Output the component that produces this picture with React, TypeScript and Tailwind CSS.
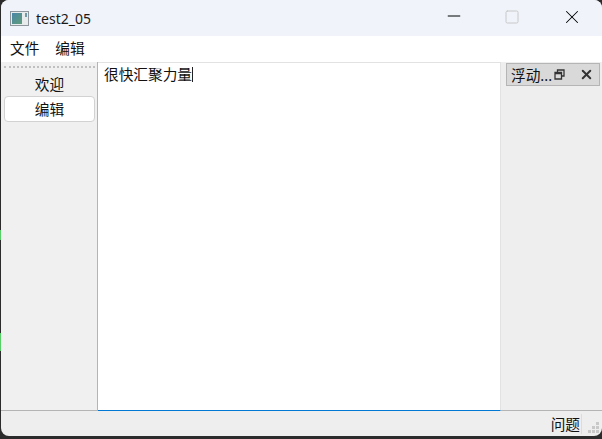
import { Minus, Square, X } from "lucide-react";

const FONT = "font-['Noto_Sans','Noto_Sans_CJK_SC',sans-serif]";

function AppIcon() {
  return (
    <svg width="19" height="15" viewBox="0 0 19 15" className="shrink-0">
      <defs>
        <linearGradient id="pane" x1="0" y1="0" x2="1" y2="1">
          <stop offset="0" stopColor="#4a86a8" />
          <stop offset="1" stopColor="#5f9c78" />
        </linearGradient>
      </defs>
      <rect x="0.5" y="0.5" width="18" height="14" fill="#e8ebec" stroke="#8f959c" />
      <rect x="2" y="2" width="10" height="11" fill="url(#pane)" />
      <rect x="15" y="2" width="2" height="4" fill="#6f9aa8" />
    </svg>
  );
}

function TitleBar() {
  return (
    <div className="flex h-9 shrink-0 items-center bg-[#f0f3f9] pl-[9px]">
      <AppIcon />
      <span className="ml-[7px] text-[14px] text-[#1a1a1a]">test2_05</span>
      <div className="ml-auto flex items-center pb-[2px]">
        <Minus size={20} strokeWidth={1.2} className="mb-[2px] mr-[40px] text-black" />
        <Square size={16} strokeWidth={1.5} className="mr-[41px] text-[#c8c8c8]" />
        <X size={22} strokeWidth={1.1} className="mr-[19px] text-black" />
      </div>
    </div>
  );
}

function MenuBar() {
  return (
    <div className="flex h-[26px] shrink-0 items-center gap-4 bg-white pb-[2px] pl-[9px] text-[14.67px] text-[#111]">
      <span>文件</span>
      <span>编辑</span>
    </div>
  );
}

function LeftDock() {
  return (
    <div className="flex w-[97px] shrink-0 flex-col border-r border-[#b4b4b4] bg-[#f0f0f0] pl-[3px] pr-[2px] pt-[4px]">
      <div className="h-[2px] border-t-2 border-dotted border-[#c0c0c0]" />
      <div className="mt-[3px] flex h-[25px] items-center justify-center text-[14.67px] text-[#111]">欢迎</div>
      <div className="flex h-[26px] items-center justify-center rounded-[4px] border border-[#d2d2d2] bg-white text-[14.67px] text-[#111]">
        编辑
      </div>
    </div>
  );
}

function RightDock() {
  return (
    <div className="w-[101px] shrink-0 pl-[5px] pr-[2px] pt-[1px]">
      <div className="flex h-[23px] items-center border border-[#b5b5b5] bg-[#d9d9d9] pl-[4px] text-[14.67px] text-[#111]">
        <span>浮动...</span>
        <svg width="11" height="11" viewBox="0 0 11 11" className="ml-[2px]">
          <path d="M3.5 3V1h6.5v6H8M1 3.5h6.5V10H1z M1 4.5h6.5" fill="none" stroke="#333" strokeWidth="1.3" />
        </svg>
        <X size={15} strokeWidth={3.2} className="ml-[14px] text-[#333]" />
      </div>
    </div>
  );
}

function StatusBar() {
  return (
    <div className="flex h-[25px] shrink-0 items-center">
      <span className="ml-auto text-[14.67px] text-[#111]">问题</span>
      <div className="ml-px h-[20px] w-px bg-[#dcdcdc]" />
      <svg width="11" height="11" viewBox="0 0 11 11" className="ml-[6px] mr-[3px] mt-[7px]">
        <g fill="#c8c8c8">
          <rect x="8" y="0" width="3" height="3" />
          <rect x="4" y="4" width="3" height="3" />
          <rect x="8" y="4" width="3" height="3" />
          <rect x="0" y="8" width="3" height="3" />
          <rect x="4" y="8" width="3" height="3" />
          <rect x="8" y="8" width="3" height="3" />
        </g>
      </svg>
    </div>
  );
}

export default function App() {
  return (
    <div className={`relative h-[439px] w-[602px] overflow-hidden bg-[#2b2b2b] pb-[3px] pl-px ${FONT}`}>
      <div className="flex h-full flex-col overflow-hidden rounded-lg bg-[#eeeeee]">
        <TitleBar />
        <MenuBar />
        <div className="flex min-h-0 flex-1 border-b border-[#b4b4b4]">
          <LeftDock />
          <div className="-mb-px flex-1 border-b border-r border-t border-[#e2e2e2] border-b-[#0078d4] bg-white pl-[6px] pt-[2px] text-[14.67px] leading-[18px] text-[#111]">
            很快汇聚力量
            <span className="inline-block h-[15px] w-px bg-[#222] align-[-2px]" />
          </div>
          <RightDock />
        </div>
        <StatusBar />
      </div>
      <div className="absolute left-0 top-[230px] h-[10px] w-px bg-[#58d068]" />
      <div className="absolute left-0 top-[333px] h-[18px] w-px bg-[#58d068]" />
    </div>
  );
}
